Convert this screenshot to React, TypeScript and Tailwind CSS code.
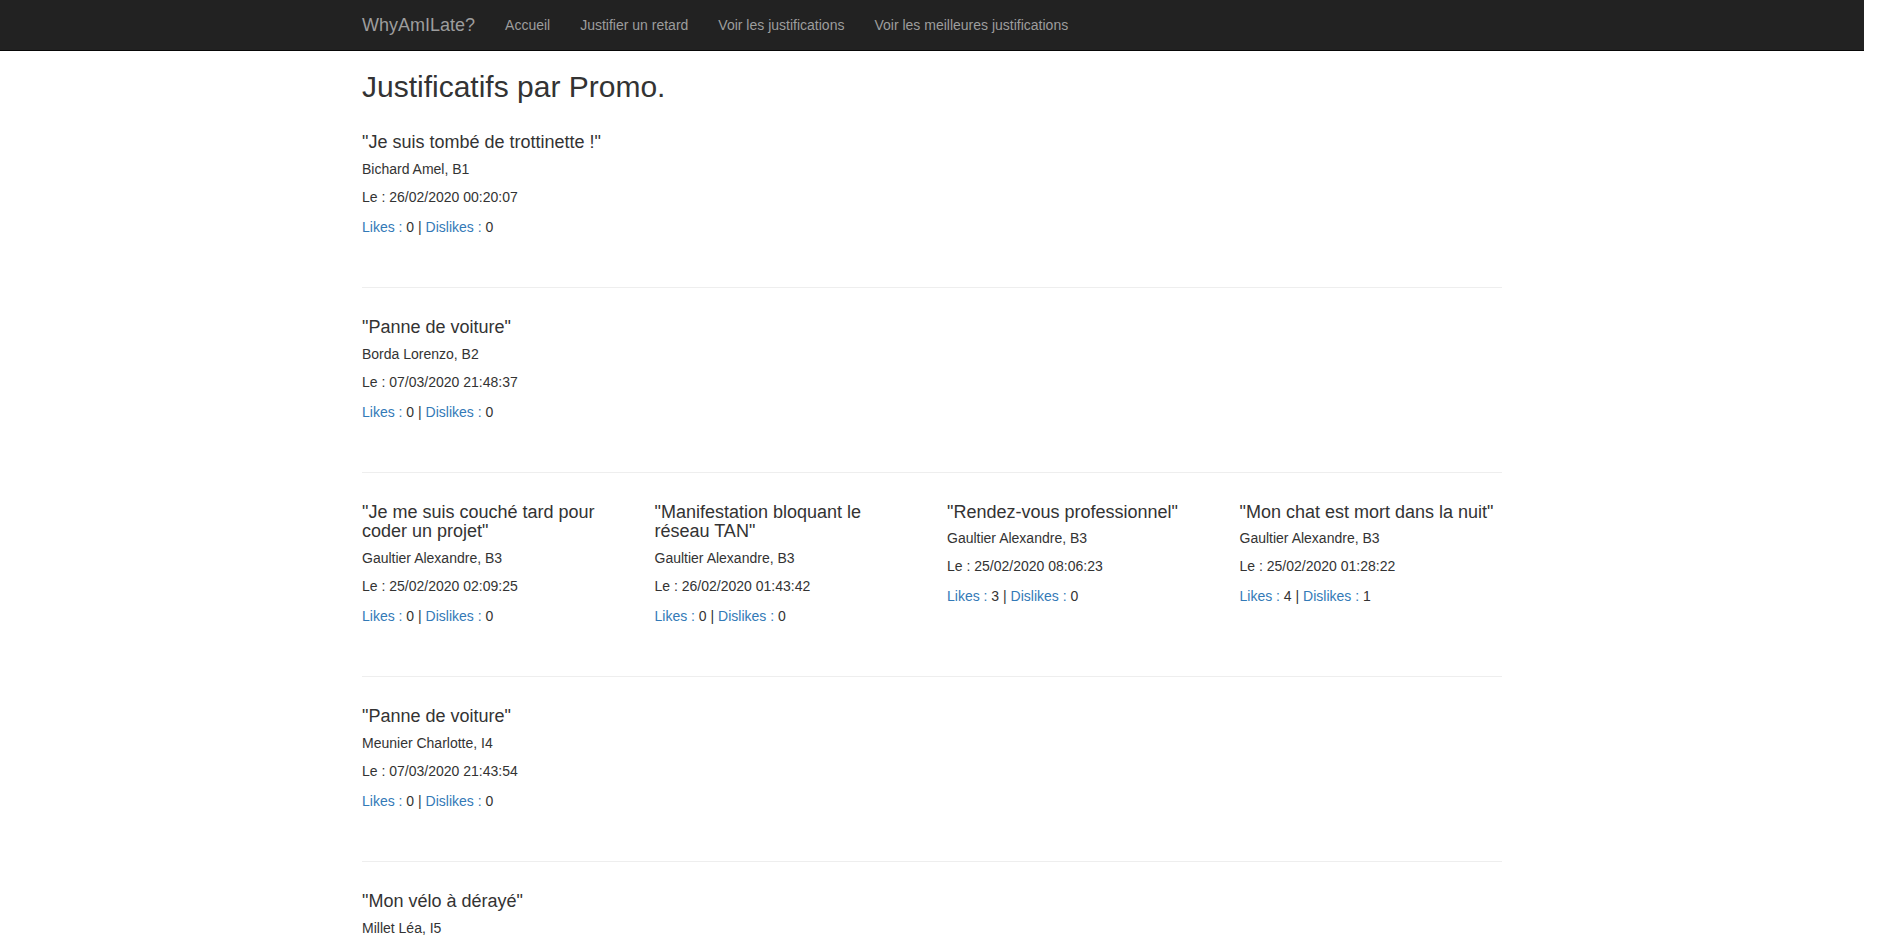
import React from "react";

type Item = { t: string; a: string; d: string; l: number; dl: number };

const sections: Item[][] = [
  [{ t: "Je suis tombé de trottinette !", a: "Bichard Amel, B1", d: "26/02/2020 00:20:07", l: 0, dl: 0 }],
  [{ t: "Panne de voiture", a: "Borda Lorenzo, B2", d: "07/03/2020 21:48:37", l: 0, dl: 0 }],
  [
    { t: "Je me suis couché tard pour coder un projet", a: "Gaultier Alexandre, B3", d: "25/02/2020 02:09:25", l: 0, dl: 0 },
    { t: "Manifestation bloquant le réseau TAN", a: "Gaultier Alexandre, B3", d: "26/02/2020 01:43:42", l: 0, dl: 0 },
    { t: "Rendez-vous professionnel", a: "Gaultier Alexandre, B3", d: "25/02/2020 08:06:23", l: 3, dl: 0 },
    { t: "Mon chat est mort dans la nuit", a: "Gaultier Alexandre, B3", d: "25/02/2020 01:28:22", l: 4, dl: 1 },
  ],
  [{ t: "Panne de voiture", a: "Meunier Charlotte, I4", d: "07/03/2020 21:43:54", l: 0, dl: 0 }],
  [{ t: "Mon vélo à dérayé", a: "Millet Léa, I5", d: "06/03/2020 08:12:40", l: 0, dl: 0 }],
];

function Card({ item }: { item: Item }) {
  return (
    <div className="flex flex-col">
      <h4 className="pt-[1px] text-[18px] leading-[19.8px] font-medium text-[#333333]">"{item.t}"</h4>
      <p className="mt-[6px] text-[14px] leading-[20px]">{item.a}</p>
      <p className="mt-[8px] text-[14px] leading-[20px]">Le : {item.d}</p>
      <p className="mt-[10px] text-[14px] leading-[20px]">
        <a href="#" className="text-[#337ab7]">Likes :</a> {item.l} |{" "}
        <a href="#" className="text-[#337ab7]">Dislikes :</a> {item.dl}
      </p>
    </div>
  );
}

export default function App() {
  return (
    <div
      className="w-[1864px] h-[939px] overflow-hidden bg-white text-[#333333] text-[14px] leading-[20px]"
      style={{ fontFamily: '"Liberation Sans", Arial, Helvetica, sans-serif' }}
    >
      <nav className="h-[51px] bg-[#222222] border-b border-[#080808]">
        <div className="w-[1170px] mx-auto flex items-start">
          <a href="#" className="px-[15px] py-[15px] text-[18px] leading-[20px] text-[#9d9d9d]">
            WhyAmILate?
          </a>
          <a href="#" className="px-[15px] py-[15px] text-[14px] leading-[20px] text-[#9d9d9d]">Accueil</a>
          <a href="#" className="px-[15px] py-[15px] text-[14px] leading-[20px] text-[#9d9d9d]">Justifier un retard</a>
          <a href="#" className="px-[15px] py-[15px] text-[14px] leading-[20px] text-[#9d9d9d]">Voir les justifications</a>
          <a href="#" className="px-[15px] py-[15px] text-[14px] leading-[20px] text-[#9d9d9d]">Voir les meilleures justifications</a>
        </div>
      </nav>
      <div className="w-[1170px] mx-auto px-[15px]">
        <h2 className="mt-[19px] text-[30px] leading-[33px] font-medium">Justificatifs par Promo.</h2>
        <div className="mt-[29px] flex flex-col">
          {sections.map((sec, i) => (
            <div key={i} className="flex flex-col">
              <div className="grid grid-cols-4 gap-x-[30px] items-start">
                {sec.map((it, j) => (
                  <Card key={j} item={it} />
                ))}
              </div>
              <div className="mt-[50px] mb-[29px] h-px bg-[#eeeeee]" />
            </div>
          ))}
        </div>
      </div>
    </div>
  );
}
